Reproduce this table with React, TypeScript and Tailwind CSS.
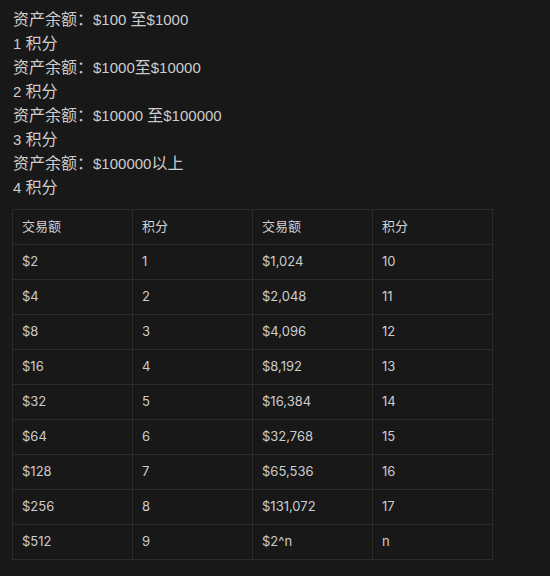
import React from 'react';

const tiers = [
  ['资产余额：$100 至$1000', '1 积分'],
  ['资产余额：$1000至$10000', '2 积分'],
  ['资产余额：$10000 至$100000', '3 积分'],
  ['资产余额：$100000以上', '4 积分'],
];

const rows = [
  ['$2', '1', '$1,024', '10'],
  ['$4', '2', '$2,048', '11'],
  ['$8', '3', '$4,096', '12'],
  ['$16', '4', '$8,192', '13'],
  ['$32', '5', '$16,384', '14'],
  ['$64', '6', '$32,768', '15'],
  ['$128', '7', '$65,536', '16'],
  ['$256', '8', '$131,072', '17'],
  ['$512', '9', '$2^n', 'n'],
];

// CJK runs render a touch larger than the latin text around them
function Line({ text }: { text: string }) {
  const parts = text.split(/([\u4e00-\u9fff\uff1a]+)/).filter(Boolean);
  return (
    <div className="h-6 whitespace-pre">
      {parts.map((p, i) =>
        /[\u4e00-\u9fff\uff1a]/.test(p) ? (
          <span key={i} className="text-[16px]" style={{ fontFamily: '"Noto Sans CJK SC", sans-serif' }}>
            {p}
          </span>
        ) : (
          <span key={i}>{p}</span>
        )
      )}
    </div>
  );
}

export default function App() {
  return (
    <div
      className="min-h-[576px] bg-[#181818] text-[#cccccc] px-[13px] pt-[6px]"
      style={{ fontFamily: 'Inter, "Noto Sans CJK SC", sans-serif' }}
    >
      <div
        className="text-[15px] leading-[24px]"
        style={{ fontFamily: '"Liberation Sans", "Noto Sans CJK SC", sans-serif' }}
      >
        {tiers.map(([range, score]) => (
          <React.Fragment key={range}>
            <Line text={range} />
            <Line text={score} />
          </React.Fragment>
        ))}
      </div>

      <table className="mt-[11px] -ml-px border-collapse text-[13px]">
        <thead>
          <tr>
            {['交易额', '积分', '交易额', '积分'].map((h, i) => (
              <th
                key={i}
                className="w-[120px] h-[35px] border border-[#2b2b2b] px-[9px] text-left font-normal text-[#d4d4d4]"
              >
                {h}
              </th>
            ))}
          </tr>
        </thead>
        <tbody>
          {rows.map((r) => (
            <tr key={r[0]}>
              {r.map((c, i) => (
                <td key={i} className="w-[120px] h-[35px] border border-[#2b2b2b] px-[9px]">
                  {c}
                </td>
              ))}
            </tr>
          ))}
        </tbody>
      </table>
    </div>
  );
}
